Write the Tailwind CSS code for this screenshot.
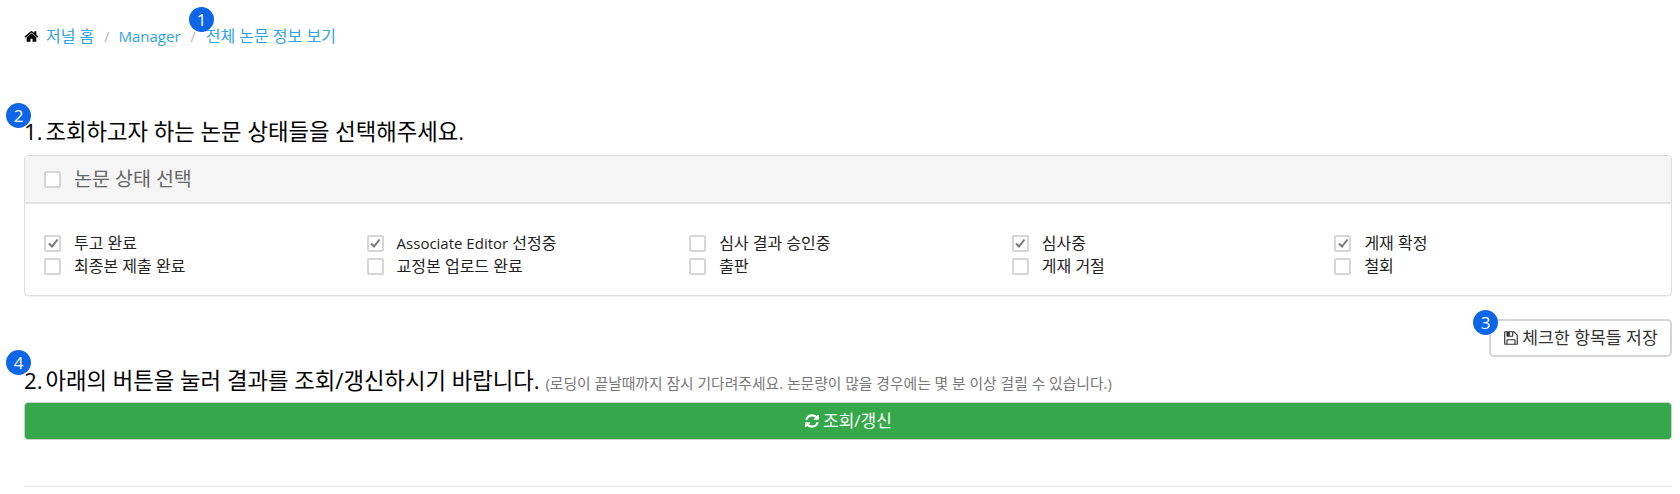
<!DOCTYPE html>
<html lang="ko">

<head>
    <meta charset="UTF-8">
    <title>전체 논문 정보 보기</title>
    <script src="https://cdn.jsdelivr.net/npm/@tailwindcss/browser@4"></script>
</head>

<body class="bg-white text-[#212529] text-[14px] font-['Open_Sans','Noto_Sans_CJK_KR',sans-serif] overflow-hidden">

    <main class="relative h-[494px] pl-[24px] pr-[8px] pt-[26px]">

        <!-- Breadcrumb -->
        <nav class="flex items-center h-[20px] text-[16px] text-[#2ea3e6]">
            <svg class="w-[15px] h-[15px] mr-[7px] text-black" viewBox="0 0 1792 1792" fill="currentColor">
                <path d="M1472 992v480q0 26-19 45t-45 19h-384v-384h-256v384h-384q-26 0-45-19t-19-45v-480q0-1 .5-3t.5-3l575-474 575 474q1 2 1 6zm223-69l-62 74q-8 9-21 11h-3q-13 0-21-7l-692-577-692 577q-12 8-24 7-13-2-21-11l-62-74q-8-10-7-23.5t11-21.5l719-599q32-26 76-26t76 26l244 204v-195q0-14 9-23t23-9h192q14 0 23 9t9 23v408l219 182q10 8 11 21.5t-7 23.5z" />
            </svg>
            <span>저널 홈</span>
            <span class="ml-[10px] mr-[9px] text-[14px] text-[#b5b5b5]">/</span>
            <span class="text-[15px]">Manager</span>
            <span class="mx-[10px] text-[14px] text-[#b5b5b5]">/</span>
            <span>전체 논문 정보 보기</span>
        </nav>

        <!-- Badge 1 -->
        <span class="absolute left-[189px] top-[7px] w-[25px] h-[25px] rounded-full bg-[#0d66e8] text-white text-[17px] flex items-center justify-center">1</span>

        <h2 class="mt-[72px] text-[22.3px] leading-[28px] text-black"><span class="mr-[-3px]">1.</span> 조회하고자 하는 논문 상태들을 선택해주세요.</h2>
        <span class="absolute left-[6px] top-[103px] w-[25px] h-[25px] rounded-full bg-[#0d66e8] text-white text-[17px] flex items-center justify-center">2</span>

        <!-- Status panel -->
        <section class="mt-[9px] border border-[#dcdcdc] rounded-[4px] shadow-[0_1px_1px_rgba(0,0,0,0.05)]">
            <div class="flex items-center h-[48px] px-[19px] bg-[#f5f5f5] border-b-2 border-[#e3e3e3] rounded-t-[4px]">
                <span class="w-[17px] h-[17px] border-2 border-[#d6d6d6] rounded-[2px] bg-white"></span>
                <span class="ml-[13px] text-[19.5px] text-[#666]">논문 상태 선택</span>
            </div>
            <div class="grid grid-cols-5 gap-y-[5px] pl-[19px] pr-[14px] pt-[30px] pb-[20px] text-[16px] leading-[18px] text-[#222]">
                <label class="flex items-center">
                    <span class="flex items-center justify-center w-[17px] h-[17px] border-2 border-[#d6d6d6] rounded-[2px]"><svg class="w-[12px] h-[12px]" viewBox="0 0 12 12" fill="none" stroke="#777" stroke-width="2"><path d="M2 6.5 5 9.5 10.5 2.5" /></svg></span>
                    <span class="ml-[13px]">투고 완료</span>
                </label>
                <label class="flex items-center">
                    <span class="flex items-center justify-center w-[17px] h-[17px] border-2 border-[#d6d6d6] rounded-[2px]"><svg class="w-[12px] h-[12px]" viewBox="0 0 12 12" fill="none" stroke="#777" stroke-width="2"><path d="M2 6.5 5 9.5 10.5 2.5" /></svg></span>
                    <span class="ml-[13px]"><span class="text-[15px]">Associate Editor</span> 선정중</span>
                </label>
                <label class="flex items-center">
                    <span class="w-[17px] h-[17px] border-2 border-[#d6d6d6] rounded-[2px]"></span>
                    <span class="ml-[13px]">심사 결과 승인중</span>
                </label>
                <label class="flex items-center">
                    <span class="flex items-center justify-center w-[17px] h-[17px] border-2 border-[#d6d6d6] rounded-[2px]"><svg class="w-[12px] h-[12px]" viewBox="0 0 12 12" fill="none" stroke="#777" stroke-width="2"><path d="M2 6.5 5 9.5 10.5 2.5" /></svg></span>
                    <span class="ml-[13px]">심사중</span>
                </label>
                <label class="flex items-center">
                    <span class="flex items-center justify-center w-[17px] h-[17px] border-2 border-[#d6d6d6] rounded-[2px]"><svg class="w-[12px] h-[12px]" viewBox="0 0 12 12" fill="none" stroke="#777" stroke-width="2"><path d="M2 6.5 5 9.5 10.5 2.5" /></svg></span>
                    <span class="ml-[13px]">게재 확정</span>
                </label>
                <label class="flex items-center">
                    <span class="w-[17px] h-[17px] border-2 border-[#d6d6d6] rounded-[2px]"></span>
                    <span class="ml-[13px]">최종본 제출 완료</span>
                </label>
                <label class="flex items-center">
                    <span class="w-[17px] h-[17px] border-2 border-[#d6d6d6] rounded-[2px]"></span>
                    <span class="ml-[13px]">교정본 업로드 완료</span>
                </label>
                <label class="flex items-center">
                    <span class="w-[17px] h-[17px] border-2 border-[#d6d6d6] rounded-[2px]"></span>
                    <span class="ml-[13px]">출판</span>
                </label>
                <label class="flex items-center">
                    <span class="w-[17px] h-[17px] border-2 border-[#d6d6d6] rounded-[2px]"></span>
                    <span class="ml-[13px]">게재 거절</span>
                </label>
                <label class="flex items-center">
                    <span class="w-[17px] h-[17px] border-2 border-[#d6d6d6] rounded-[2px]"></span>
                    <span class="ml-[13px]">철회</span>
                </label>
            </div>
        </section>

        <!-- Save button -->
        <div class="flex justify-end mt-[23px]">
            <button class="flex items-center justify-center w-[183px] h-[38px] border-2 border-[#d4d4d4] rounded-[5px] bg-white text-[#333] text-[17.2px]">
                <svg class="w-[16px] h-[16px] mr-[3px]" viewBox="0 0 1792 1792" fill="currentColor">
                    <path d="M512 1536h768v-384h-768v384zm896 0h128v-896q0-14-10-38.5t-20-34.5l-281-281q-10-10-34-20t-39-10v416q0 40-28 68t-68 28h-576q-40 0-68-28t-28-68v-416h-128v1280h128v-416q0-40 28-68t68-28h832q40 0 68 28t28 68v416zm-384-928v-320q0-13-9.5-22.5t-22.5-9.5h-192q-13 0-22.5 9.5t-9.5 22.5v320q0 13 9.5 22.5t22.5 9.5h192q13 0 22.5-9.5t9.5-22.5zm640 32v928q0 40-28 68t-68 28h-1344q-40 0-68-28t-28-68v-1344q0-40 28-68t68-28h928q40 0 88 20t76 48l280 280q28 28 48 76t20 88z" />
                </svg>
                체크한 항목들 저장
            </button>
        </div>
        <span class="absolute left-[1473px] top-[310px] w-[25px] h-[25px] rounded-full bg-[#0d66e8] text-white text-[17px] flex items-center justify-center">3</span>

        <h2 class="mt-[10px] text-[22.3px] leading-[28px] text-black"><span class="mr-[-3px]">2.</span> 아래의 버튼을 눌러 결과를 조회/갱신하시기 바랍니다. <small class="text-[14.8px] text-[#777]">(로딩이 끝날때까지 잠시 기다려주세요. 논문량이 많을 경우에는 몇 분 이상 걸릴 수 있습니다.)</small></h2>
        <span class="absolute left-[6px] top-[350px] w-[25px] h-[25px] rounded-full bg-[#0d66e8] text-white text-[17px] flex items-center justify-center">4</span>

        <!-- Search button -->
        <button class="flex items-center justify-center w-full h-[38px] mt-[5px] border border-[#cfcfcf] rounded-[4px] bg-[#35a84a] text-white text-[17px]">
            <svg class="w-[16px] h-[16px] mr-[3px]" viewBox="0 0 1792 1792" fill="currentColor">
                <path d="M1639 1056q0 5-1 7-64 268-268 434.5t-478 166.5q-146 0-282.5-55t-243.5-157l-129 129q-19 19-45 19t-45-19-19-45v-448q0-26 19-45t45-19h448q26 0 45 19t19 45-19 45l-137 137q71 66 161 102t187 36q134 0 250-65t186-179q11-17 53-117 8-23 30-23h192q13 0 22.5 9.5t9.5 22.5zm25-800v448q0 26-19 45t-45 19h-448q-26 0-45-19t-19-45 19-45l138-138q-148-137-349-137-134 0-250 65t-186 179q-11 17-53 117-8 23-30 23h-199q-13 0-22.5-9.5t-9.5-22.5v-7q65-268 270-434.5t480-166.5q146 0 284 55.5t245 156.5l130-129q19-19 45-19t45 19 19 45z" />
            </svg>
            조회/갱신
        </button>

        <hr class="mt-[46px] border-t border-[#e5e5e5]">
    </main>

</body>

</html>
